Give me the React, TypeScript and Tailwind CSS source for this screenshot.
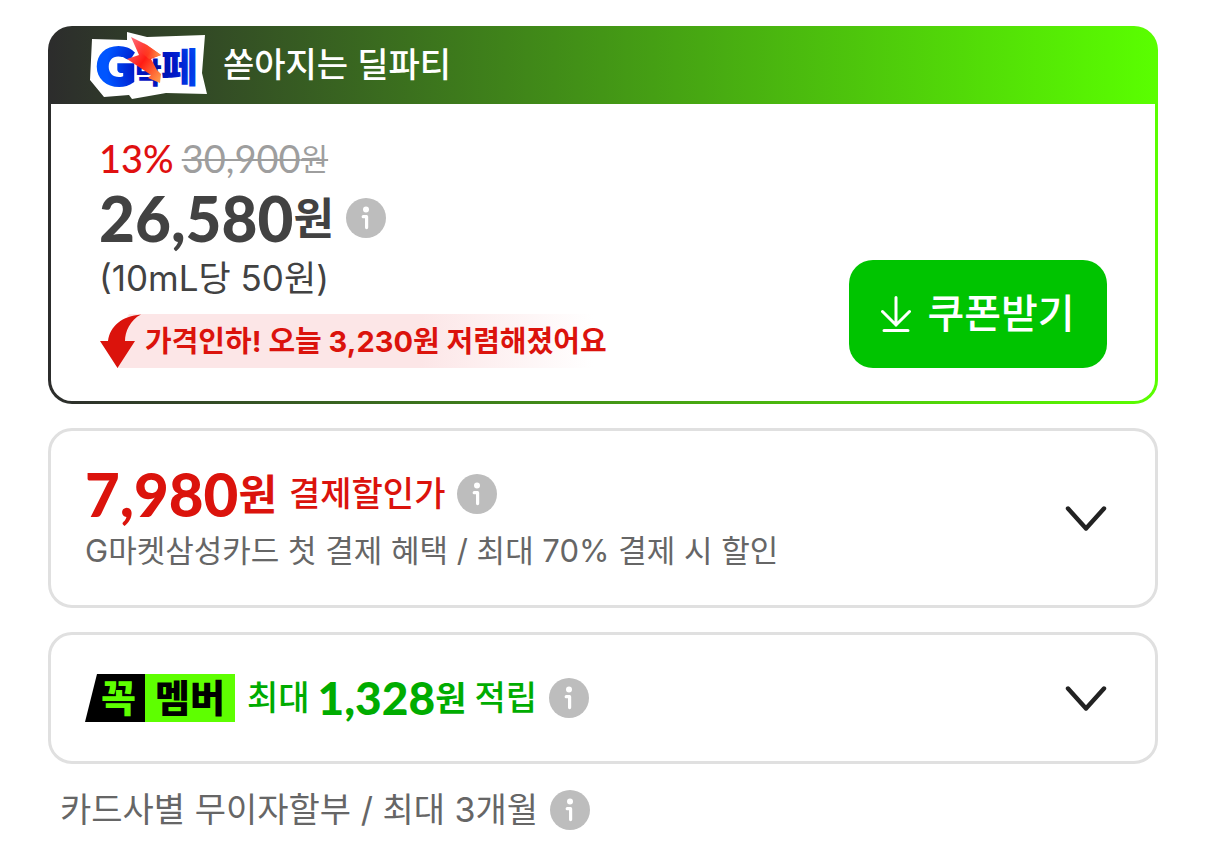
import { ReactNode } from "react";

function InfoButton({ label }: { label: string }) {
  return (
    <button type="button" aria-label={label} className="shrink-0 size-10">
      <svg viewBox="0 0 40 40" className="size-10" fill="none">
        <circle cx="20" cy="20" r="20" fill="#bdbdbd" />
        <circle cx="20" cy="11.5" r="3" fill="#fff" />
        <path
          d="M17.2 18.7H20.6V29.6"
          stroke="#fff"
          strokeWidth="3.2"
          strokeLinecap="round"
          strokeLinejoin="round"
        />
      </svg>
    </button>
  );
}

function ExpandButton({ label }: { label: string }) {
  return (
    <button type="button" aria-label={label} aria-expanded="false" className="shrink-0">
      <svg viewBox="0 0 42 26" className="w-[42px] h-[26px]" fill="none">
        <path
          d="M3 3.5 21 23.5 39 3.5"
          stroke="#222"
          strokeWidth="4.4"
          strokeLinecap="round"
          strokeLinejoin="round"
        />
      </svg>
    </button>
  );
}

function DealLogo() {
  return (
    <svg viewBox="0 0 117 67" className="w-[117px] h-[67px] shrink-0" role="img" aria-label="G락페">
      <defs>
        <radialGradient id="letters" gradientUnits="userSpaceOnUse" cx="66" cy="36" r="50">
          <stop offset="0" stopColor="#0010a0" />
          <stop offset="0.4" stopColor="#0018c8" />
          <stop offset="1" stopColor="#0055ff" />
        </radialGradient>
        <linearGradient id="bolt" x1="0" y1="0" x2="1" y2="1">
          <stop offset="0" stopColor="#ff7b8a" />
          <stop offset="0.5" stopColor="#ff1c14" />
          <stop offset="1" stopColor="#ffa550" />
        </linearGradient>
        <linearGradient id="boltWing" x1="0" y1="0" x2="1" y2="0">
          <stop offset="0" stopColor="#ff3a1c" stopOpacity="0" />
          <stop offset="1" stopColor="#ff9a4a" />
        </linearGradient>
      </defs>
      <path
        d="M2 7 37 8 37 0 57 5 115 3 112 41 117 62 76 61 42 67 39 63 14 65 0 48Z"
        fill="#fff"
      />
      <g fill="url(#letters)" fontFamily="'Noto Sans CJK KR', sans-serif" fontWeight="900">
        <text x="7" y="53" fontSize="52" stroke="url(#letters)" strokeWidth="4" fontFamily="Lato, sans-serif">
          G
        </text>
        <text x="45" y="52" fontSize="29">락</text>
        <text x="71" y="50" fontSize="40">페</text>
      </g>
      <path
        d="M41 5 57 13 71 23 61 27 67 38 71 42 70 51 58 46 61 43 37 27 49 23Z"
        fill="url(#bolt)"
      />
      <path d="M54 11 71 23 59 27 48 18Z" fill="url(#boltWing)" />
    </svg>
  );
}

function PriceDropBadge() {
  return (
    <div className="flex h-[54px]">
      <svg viewBox="0 0 42 54" className="w-[42px] h-[54px] shrink-0">
        <path d="M42 0V54H18V20L30 0Z" fill="#fce6e7" />
        <path d="M1 27H9C11 12 23 2 42 .5 31 6 26 18 26 27H36L18.5 54Z" fill="#db130c" />
      </svg>
      <p className="flex items-center pl-1 bg-linear-to-r/srgb from-[#fce6e7] from-60% to-white to-97% text-[29px] leading-none font-bold text-[#db130c] whitespace-nowrap">
        가격인하! 오늘 3,230원 저렴해졌어요
      </p>
    </div>
  );
}

function BenefitCard({ children, expandLabel }: { children: ReactNode; expandLabel: string }) {
  return (
    <section className="flex items-center justify-between border-3 border-[#e0e0e0] rounded-3xl pl-[34px] pr-12">
      {children}
      <ExpandButton label={expandLabel} />
    </section>
  );
}

export default function App() {
  return (
    <main className="flex flex-col gap-6 px-12 pt-[26px] bg-white font-[Inter,'Noto_Sans_CJK_KR',sans-serif]">
      <section className="rounded-3xl bg-linear-to-r/srgb from-[#2c2c2c] to-[#5aff00] px-[3px] pb-[3px] overflow-hidden">
        <header className="flex items-center h-[78px] pl-[39px] gap-4">
          <DealLogo />
          <h2 className="text-[34px] leading-none font-medium text-white whitespace-nowrap">
            쏟아지는 딜파티
          </h2>
        </header>
        <div className="flex items-end justify-between bg-white rounded-b-[21px] pl-12 pr-12 pt-8 pb-[33px]">
          <div className="flex flex-col">
            <div className="flex items-center h-11 gap-2 leading-none font-[Lato,'Noto_Sans_CJK_KR',sans-serif]">
              <strong className="text-[38px] font-medium text-[#e01010]">13%</strong>
              <del className="flex items-center text-[38px] text-[#9e9e9e] decoration-2">
                30,900<span className="text-[30px]">원</span>
              </del>
            </div>
            <div className="flex items-center h-[76px] gap-3 text-[#424242]">
              <p className="flex items-center text-[62px] leading-none font-black font-[Lato,'Noto_Sans_CJK_KR',sans-serif]">
                26,580<span className="text-[44px] font-bold">원</span>
              </p>
              <InfoButton label="가격 안내" />
            </div>
            <p className="flex items-center h-11 mb-[14px] text-[35px] leading-none text-[#424242]">
              (10mL당 50원)
            </p>
            <PriceDropBadge />
          </div>
          <button
            type="button"
            className="flex items-center justify-center gap-4 w-[258px] h-[108px] shrink-0 rounded-3xl bg-[#00c400] text-white text-[40px] leading-none font-medium"
          >
            <svg viewBox="0 0 30 36" className="w-[30px] h-9" fill="none" stroke="#fff" strokeWidth="3" strokeLinecap="round">
              <path d="M15 1.5V29M1.5 15.5 15 29 28.5 15.5M3 34.5H27" />
            </svg>
            쿠폰받기
          </button>
        </div>
      </section>

      <BenefitCard expandLabel="결제할인 자세히 보기">
        <div className="flex flex-col pt-[30px] pb-8">
          <div className="flex items-center h-[66px] gap-3 leading-none text-[#db130c]">
            <strong className="flex items-center text-[60px] font-black font-[Lato,'Noto_Sans_CJK_KR',sans-serif]">
              7,980<span className="text-[42px] font-bold">원</span>
            </strong>
            <span className="text-[34px] font-medium">결제할인가</span>
            <InfoButton label="결제할인가 안내" />
          </div>
          <p className="flex items-center h-[46px] text-[31px] leading-none text-[#666] whitespace-nowrap">
            G마켓삼성카드 첫 결제 혜택 / 최대 70% 결제 시 할인
          </p>
        </div>
      </BenefitCard>

      <BenefitCard expandLabel="멤버 적립 자세히 보기">
        <div className="flex items-center h-[126px] gap-3">
          <div className="flex h-12 text-[38px] leading-[48px] font-black">
            <span className="w-[60px] pl-4 bg-black text-[#5eff00] [clip-path:polygon(12px_0,100%_0,100%_100%,0_100%)]">
              꼭
            </span>
            <span className="w-[90px] text-center bg-[#5eff00] text-black">멤버</span>
          </div>
          <p className="flex items-center gap-2 text-[34px] leading-none font-medium text-[#00ac00]">
            최대
            <strong className="flex items-center text-[46px] font-black font-[Lato,'Noto_Sans_CJK_KR',sans-serif]">
              1,328<span className="text-[34px] font-bold">원</span>
            </strong>
            적립
          </p>
          <InfoButton label="적립 안내" />
        </div>
      </BenefitCard>

      <div className="flex items-center gap-3 pl-3 h-11">
        <p className="text-[34px] leading-none text-[#666] whitespace-nowrap">
          카드사별 무이자할부 / 최대 3개월
        </p>
        <InfoButton label="무이자할부 안내" />
      </div>
    </main>
  );
}
